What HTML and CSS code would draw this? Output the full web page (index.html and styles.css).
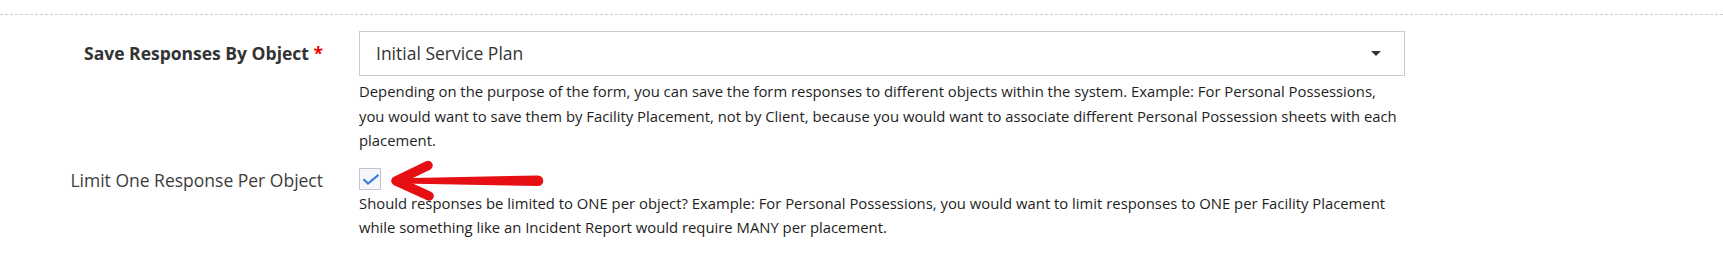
FILE: index.html
```html
<!DOCTYPE html>
<html lang="en">

<head>
    <meta charset="UTF-8">
    <meta name="viewport" content="width=device-width, initial-scale=1.0">
    <title>Form Settings</title>
    <link rel="stylesheet" href="styles.css">
</head>

<body>
    <div class="divider"></div>

    <form class="settings">
        <!-- Save responses by -->
        <div class="form-group">
            <label class="control-label">Save Responses By Object <span class="required">*</span></label>
            <div class="control">
                <div class="dropdown">
                    <span class="dropdown-value">Initial Service Plan</span>
                    <span class="caret"></span>
                </div>
                <p class="help">Depending on the purpose of the form, you can save the form responses to different objects within the system. Example: For Personal Possessions, you would want to save them by Facility Placement, not by Client, because you would want to associate different Personal Possession sheets with each placement.</p>
            </div>
        </div>

        <!-- Limit one response -->
        <div class="form-group">
            <label class="control-label light">Limit One Response Per Object</label>
            <div class="control">
                <span class="checkbox">
                    <svg width="22" height="22" viewBox="0 0 22 22">
                        <path d="M4.5 11.2 L9 15.6 L19.5 6.8" fill="none" stroke="#3b83d6" stroke-width="2.2" />
                    </svg>
                </span>
                <svg class="annotation" width="160" height="44" viewBox="0 0 160 44">
                    <path d="M12 18.2 L149 15.4 A5.3 5.3 0 0 1 149 26 L12 23.6 Z" fill="#e60f14" />
                    <polyline points="39,5.5 7,21 40,36" fill="none" stroke="#e60f14" stroke-width="9.5"
                        stroke-linecap="round" stroke-linejoin="round" />
                </svg>
                <p class="help">Should responses be limited to ONE per object? Example: For Personal Possessions, you would want to limit responses to ONE per Facility Placement while something like an Incident Report would require MANY per placement.</p>
            </div>
        </div>
    </form>
</body>

</html>
```

FILE: styles.css
```css
body {
    font-family: "Open Sans", Arial, sans-serif;
    margin: 0;
    padding-top: 14px;
    background-color: #fff;
    color: #333;
}

.divider {
    border-top: 1px dashed #ccc;
}

.settings {
    margin-top: 16px;
}

.form-group {
    display: grid;
    grid-template-columns: 323px 1046px;
    column-gap: 36px;
    margin-bottom: 15px;
}

.control-label {
    text-align: right;
    font-size: 17.5px;
    font-weight: bold;
    line-height: 25px;
    padding-top: 10px;
    color: #333;
}

.control-label.light {
    font-weight: normal;
    padding-top: 0;
    color: #3d3d3d;
}

.required {
    color: #e00;
}

.control {
    position: relative;
}

.dropdown {
    display: flex;
    align-items: center;
    justify-content: space-between;
    height: 45px;
    box-sizing: border-box;
    border: 1px solid #ccc;
    padding: 0 23px 0 16px;
    font-size: 17.5px;
    line-height: 25px;
    color: #333;
}

.caret {
    width: 0;
    height: 0;
    border-left: 5.5px solid transparent;
    border-right: 5.5px solid transparent;
    border-top: 5.5px solid #333;
}

.help {
    max-width: 1042px;
    margin: 3px 0 0;
    font-size: 14.85px;
    line-height: 24.5px;
    color: #1e1e1e;
}

.checkbox {
    display: block;
    width: 22px;
    height: 22px;
    box-sizing: border-box;
    border: 1px solid #c3c5cc;
    background-color: #f5f7fa;
}

.checkbox svg {
    display: block;
    margin: -1px;
}

.annotation {
    position: absolute;
    left: 30px;
    top: -8px;
}

.control .checkbox + .annotation + .help {
    margin-top: 1px;
}
```
